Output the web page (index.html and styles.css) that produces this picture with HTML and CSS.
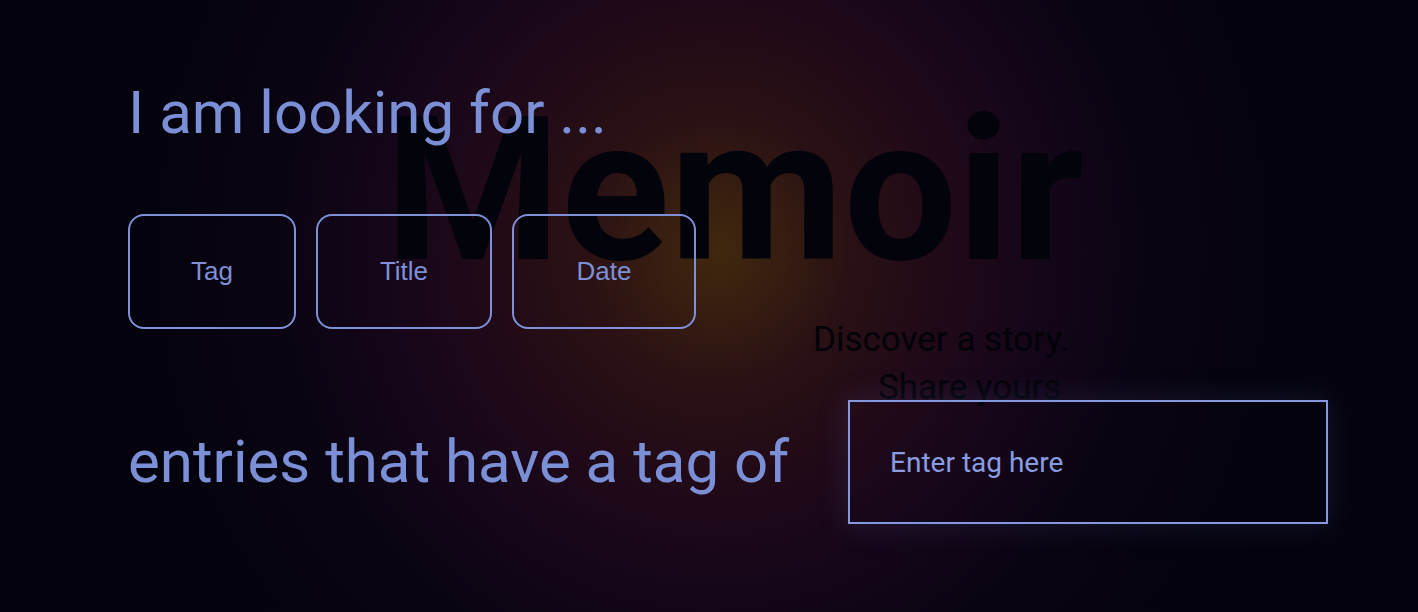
FILE: index.html
```html
<!DOCTYPE html>
<html lang="en">
<head>
<meta charset="utf-8">
<title>Memoir – Search</title>
<link rel="stylesheet" href="styles.css">
</head>
<body>
  <div class="backdrop" aria-hidden="true">
    <div class="hero">
      <div class="brand">Memoir</div>
      <div class="tagline">
        <span class="tag-line-1">Discover a story.</span>
        <span class="tag-line-2">Share yours</span>
      </div>
    </div>
  </div>

  <main class="search">
    <h1 class="lead">I am looking for ...</h1>
    <div class="choices">
      <button class="choice choice-tag" type="button">Tag</button>
      <button class="choice choice-title" type="button">Title</button>
      <button class="choice choice-date" type="button">Date</button>
    </div>
    <div class="query">
      <h2 class="query-label">entries that have a tag of</h2>
      <input class="query-input" type="text" placeholder="Enter tag here">
    </div>
  </main>
</body>
</html>
```

FILE: styles.css
```css
html, body {
  margin: 0;
  padding: 0;
  height: 100%;
}

body {
  position: relative;
  min-height: 612px;
  overflow: hidden;
  font-family: Roboto, "Liberation Sans", sans-serif;
  background-color: #04030d;
  background-image:
    radial-gradient(ellipse 130px 130px at 718px 250px, rgba(75, 55, 10, 0.55), rgba(75, 55, 10, 0) 100%),
    radial-gradient(ellipse 640px 660px at 712px 250px, #311612 0%, #2b1114 20%, #1f0918 38%, #140619 52%, #0a0412 68%, #05030e 84%, #04030d 100%);
}

/* background landing layer, sits underneath the search panel */
.backdrop {
  position: absolute;
  inset: 0;
  z-index: 0;
}

.hero {
  display: flex;
  flex-direction: column;
  padding: 91px 0 0 385px;
}

.brand {
  font-family: Roboto, sans-serif;
  font-weight: 700;
  font-size: 201px;
  line-height: 200px;
  color: #02030b;
}

.tagline {
  display: flex;
  flex-direction: column;
  padding-left: 428px;
  margin-top: 25px;
  font-family: Roboto, sans-serif;
  font-size: 35px;
  line-height: 48px;
  color: #020209;
}

.tag-line-2 {
  padding-left: 65px;
}

/* foreground search panel */
.search {
  position: relative;
  z-index: 1;
  display: flex;
  flex-direction: column;
  padding: 78px 0 0 128px;
}

.lead {
  margin: 0;
  font-family: Roboto, sans-serif;
  font-weight: 400;
  font-size: 60px;
  line-height: 70px;
  color: #7b8fd7;
}

.choices {
  display: flex;
  gap: 20px;
  margin-top: 66px;
}

.choice {
  height: 115px;
  padding: 0;
  border: 2px solid #7d90d8;
  border-radius: 16px;
  background: transparent;
  font-family: "Liberation Sans", Arial, sans-serif;
  font-size: 26px;
  color: #7d90d8;
  cursor: pointer;
}

.choice-tag { width: 168px; }
.choice-title { width: 176px; }
.choice-date { width: 184px; }

.query {
  display: flex;
  align-items: center;
  gap: 59px;
  margin-top: 71px;
}

.query-label {
  margin: 0;
  font-family: Roboto, sans-serif;
  font-weight: 400;
  font-size: 60px;
  line-height: 70px;
  color: #7b8fd7;
}

.query-input {
  box-sizing: border-box;
  width: 480px;
  height: 124px;
  padding: 0 40px;
  border: 2px solid #8398e0;
  background: transparent;
  outline: none;
  font-family: Roboto, sans-serif;
  font-size: 28px;
  color: #8c9de0;
  box-shadow: 0 0 30px 2px rgba(130, 150, 235, 0.13);
}

.query-input::placeholder {
  color: #8a9ce0;
  opacity: 1;
}
```
